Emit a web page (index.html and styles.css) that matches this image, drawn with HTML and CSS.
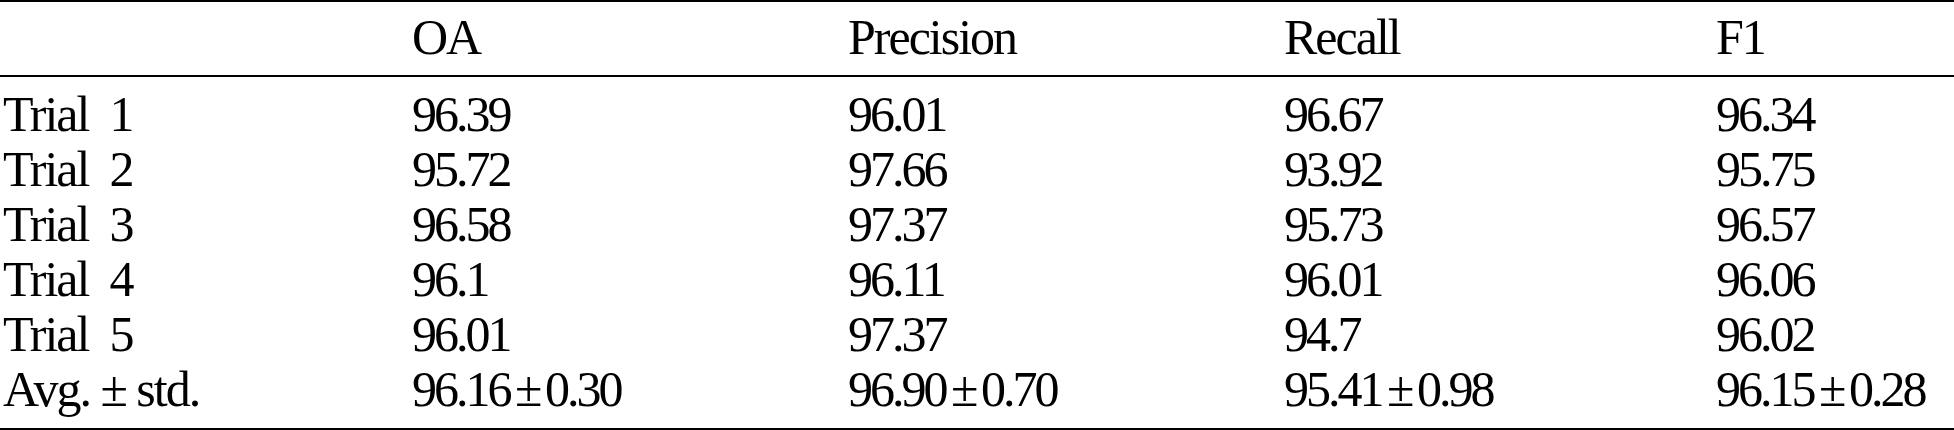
FILE: index.html
```html
<!DOCTYPE html>
<html lang="en">
<head>
    <meta charset="UTF-8">
    <title>Trial results</title>
    <link rel="stylesheet" href="styles.css">
</head>
<body>
    <table class="results">
        <thead>
            <tr>
                <th></th>
                <th>OA</th>
                <th>Precision</th>
                <th>Recall</th>
                <th>F1</th>
            </tr>
        </thead>
        <tbody>
            <tr class="first">
                <td>Trial&nbsp;&nbsp;1</td>
                <td>96.39</td>
                <td>96.01</td>
                <td>96.67</td>
                <td>96.34</td>
            </tr>
            <tr>
                <td>Trial&nbsp;&nbsp;2</td>
                <td>95.72</td>
                <td>97.66</td>
                <td>93.92</td>
                <td>95.75</td>
            </tr>
            <tr>
                <td>Trial&nbsp;&nbsp;3</td>
                <td>96.58</td>
                <td>97.37</td>
                <td>95.73</td>
                <td>96.57</td>
            </tr>
            <tr>
                <td>Trial&nbsp;&nbsp;4</td>
                <td>96.1</td>
                <td>96.11</td>
                <td>96.01</td>
                <td>96.06</td>
            </tr>
            <tr>
                <td>Trial&nbsp;&nbsp;5</td>
                <td>96.01</td>
                <td>97.37</td>
                <td>94.7</td>
                <td>96.02</td>
            </tr>
            <tr class="last">
                <td>Avg. &plusmn; std.</td>
                <td>96.16 &plusmn; 0.30</td>
                <td>96.90 &plusmn; 0.70</td>
                <td>95.41 &plusmn; 0.98</td>
                <td>96.15 &plusmn; 0.28</td>
            </tr>
        </tbody>
    </table>
</body>
</html>
```

FILE: styles.css
```css
body {
    margin: 0;
    padding: 0;
    background-color: #fff;
    color: #000;
    font-family: "Liberation Serif", "Times New Roman", serif;
}

.results {
    width: 1954px;
    border-collapse: collapse;
    table-layout: fixed;
    border-top: 2px solid #000;
    border-bottom: 2px solid #000;
    font-size: 50px;
    letter-spacing: -2px;
    line-height: 55px;
}

.results th,
.results td {
    padding: 0 0 0 3px;
    text-align: left;
    font-weight: normal;
    white-space: nowrap;
    height: 55px;
}

/* numbers sit a little tighter than the labels */
.results td + td {
    letter-spacing: -3px;
    word-spacing: -4px;
}

.results th:nth-child(1) { width: 406px; }
.results th:nth-child(2) { width: 433px; }
.results th:nth-child(3) { width: 433px; }
.results th:nth-child(4) { width: 429px; }

.results thead th {
    padding-top: 8px;
    padding-bottom: 10px;
    border-bottom: 2px solid #000;
}

.results tr.first td {
    padding-top: 10px;
}

.results tr.last td {
    padding-bottom: 11px;
}
```
